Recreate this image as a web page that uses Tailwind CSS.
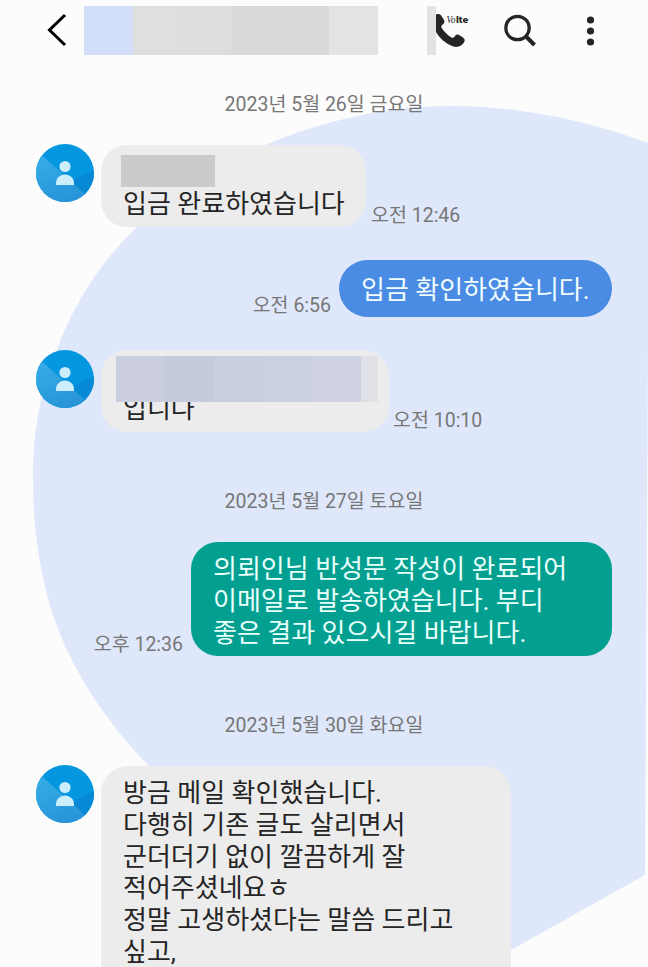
<!DOCTYPE html>
<html lang="ko">
<head>
  <meta charset="UTF-8">
  <meta name="viewport" content="width=device-width, initial-scale=1.0">
  <title>메시지</title>
  <script src="https://cdn.jsdelivr.net/npm/@tailwindcss/browser@4"></script>
</head>
<body class="bg-[#fcfcfc] font-['Roboto','Noto_Sans_CJK_KR',sans-serif] text-[#252525]">
  <!-- 아바타 아이콘 -->
  <svg class="absolute size-0">
    <defs>
      <clipPath id="round"><circle cx="29" cy="29" r="29"/></clipPath>
      <linearGradient id="light" x1="0" y1="0" x2="0.4" y2="1">
        <stop offset="0" stop-color="#37b0e8"/>
        <stop offset="1" stop-color="#2895d8"/>
      </linearGradient>
      <symbol id="avatar" viewBox="0 0 58 58">
        <g clip-path="url(#round)">
          <rect width="58" height="58" fill="#0596e0"/>
          <path d="M29 40L58 26V58H40z" fill="#0789d5"/>
          <path d="M0 6L9 14L49 50L58 58H0z" fill="url(#light)"/>
        </g>
        <circle cx="29" cy="22.500" r="5.600" fill="#cbedfc"/>
        <path d="M20 41V39.500C20 34 24 30.500 29 30.500S38 34 38 39.500V41z" fill="#cbedfc"/>
      </symbol>
    </defs>
  </svg>

  <div class="relative isolate flex h-[967px] w-[648px] flex-col overflow-hidden">
    <!-- 배경 도형 -->
    <svg class="absolute inset-0 -z-10" width="648" height="967" viewBox="0 0 648 967">
      <path d="M648 143C580 118 515 106 450 106C387 106 325 120 265 145C215 165 174 192 137 227C100 262 74 304 57 349C40 394 33 430 33 478C33 524 38 563 50 606C67 662 102 718 148 765L300 967H482L511 950L645 875L648 350z" fill="#dfe8fb"/>
    </svg>

    <!-- 상단 바 -->
    <header class="flex h-[61px] shrink-0 items-center pl-[46px]">
      <svg class="-mt-0.5" width="22" height="34" viewBox="0 0 22 34" fill="none" stroke="#000" stroke-width="3"><path d="M19 2L3.500 17L19 32"/></svg>
      <div class="ml-4 flex h-[49px]">
        <div class="w-[49px] bg-[#d3dff8]"></div>
        <div class="w-[49px] bg-[#dfdfdf]"></div>
        <div class="w-[49px] bg-[#dddddd]"></div>
        <div class="w-[98px] bg-[#d9d9d9]"></div>
        <div class="w-[49px] bg-[#e3e3e3]"></div>
      </div>
      <div class="ml-[49px] h-[49px] w-[9px] bg-[#e3e3e3]"></div>
      <svg width="36" height="49" viewBox="436 6 36 49" fill="#252525">
        <path d="M436 14.500C438 13.500 440 14 441.500 16L444 20C445 22 444.300 23.500 442.500 24.700C441 25.800 441 27 442 28.500C444.500 32 447.500 35 451 37.200C452.500 38.200 453.700 38 454.700 36.500C456 34.500 457.500 34 459.500 35.200L463 37.500C465 39 465.200 40.500 464 42.500C461.500 46.500 457 48 452 46C445 43 439.500 38 436 32z"/>
        <text x="446.500" y="23" font-size="10.500" font-style="italic" textLength="9" lengthAdjust="spacingAndGlyphs" font-family="Liberation Serif, serif">Vo</text>
        <text x="456" y="22.800" font-size="9.500" font-weight="900" textLength="12" lengthAdjust="spacingAndGlyphs" font-family="Roboto, sans-serif">lte</text>
      </svg>
      <svg class="ml-8" width="34" height="34" viewBox="0 0 34 34" fill="none" stroke="#252525"><circle cx="13.500" cy="14" r="11.700" stroke-width="3.200"/><path d="M22 22.500L30.500 31" stroke-width="4"/></svg>
      <svg class="ml-12" width="10" height="30" viewBox="0 0 10 30" fill="#252525"><circle cx="4.500" cy="4" r="3.600"/><circle cx="4.500" cy="15" r="3.600"/><circle cx="4.500" cy="26" r="3.600"/></svg>
    </header>

    <!-- 대화 -->
    <main class="flex flex-col pr-9 pl-9 text-[26px] leading-[31.8px]">
      <p class="mt-[30px] text-center text-[19.5px] leading-[28px] text-[#777]">2023년 5월 26일 금요일</p>

      <div class="mt-[26px] flex">
        <svg class="-mt-px size-[58px]"><use href="#avatar"/></svg>
        <div class="ml-[7px] h-[82px] w-[265px] rounded-[26px] bg-[#ececec] pt-[10px] pl-[22px]">
          <div class="-ml-[2px] h-8 w-[94px] bg-[#cbcbcb]"></div>
          <p class="pt-[2px]">입금 완료하였습니다</p>
        </div>
        <span class="-mb-px ml-[5px] self-end text-[19.5px] leading-6 text-[#777]">오전 12:46</span>
      </div>

      <div class="mt-[33px] flex justify-end">
        <span class="-mb-px mr-2 self-end text-[19.5px] leading-6 text-[#777]">오전 6:56</span>
        <div class="flex h-[57px] w-[273px] items-center rounded-full bg-[#4a8ce4] pt-[5px] pl-[22px] text-[#f1fcff]">입금 확인하였습니다.</div>
      </div>

      <div class="mt-[33px] flex">
        <svg class="size-[58px]"><use href="#avatar"/></svg>
        <div class="relative ml-[7px] h-[82px] w-[288px] rounded-[26px] bg-[#ececec] pt-[44px] pl-[22px]">
          <p>입니다</p>
          <!-- 글자 위를 가리는 모자이크 -->
          <div class="absolute top-[6px] left-[15px] flex h-[46px]">
            <div class="w-[49px] bg-[#cbcede]"></div>
            <div class="w-[49px] bg-[#c5cadd]"></div>
            <div class="w-[49px] bg-[#c8cddf]"></div>
            <div class="w-[49px] bg-[#cbd0e0]"></div>
            <div class="w-[49px] bg-[#cfd2e1]"></div>
            <div class="w-[17px] bg-[#e0e1e7]"></div>
          </div>
        </div>
        <span class="-mb-px ml-1 self-end text-[19.5px] leading-6 text-[#777]">오전 10:10</span>
      </div>

      <p class="mt-[56px] text-center text-[19.5px] leading-[28px] text-[#777]">2023년 5월 27일 토요일</p>

      <div class="mt-[26px] flex justify-end">
        <span class="-mb-px mr-2 self-end text-[19.5px] leading-6 text-[#777]">오후 12:36</span>
        <div class="h-[114px] w-[421px] rounded-[27px] bg-[#03a091] pt-[12px] pl-[22px] text-[#e8fffb]">
          의뢰인님 반성문 작성이 완료되어<br>
          이메일로 발송하였습니다. 부디<br>
          좋은 결과 있으시길 바랍니다.
        </div>
      </div>

      <p class="mt-[56px] text-center text-[19.5px] leading-[28px] text-[#777]">2023년 5월 30일 화요일</p>

      <div class="mt-[26px] flex">
        <svg class="-mt-px size-[58px]"><use href="#avatar"/></svg>
        <div class="ml-[7px] h-[240px] w-[410px] rounded-t-[27px] bg-[#ececec] pt-[12px] pl-[22px]">
          방금 메일 확인했습니다.<br>
          다행히 기존 글도 살리면서<br>
          군더더기 없이 깔끔하게 잘<br>
          적어주셨네요ㅎ<br>
          정말 고생하셨다는 말씀 드리고<br>
          싶고,
        </div>
      </div>
    </main>
  </div>
</body>
</html>
